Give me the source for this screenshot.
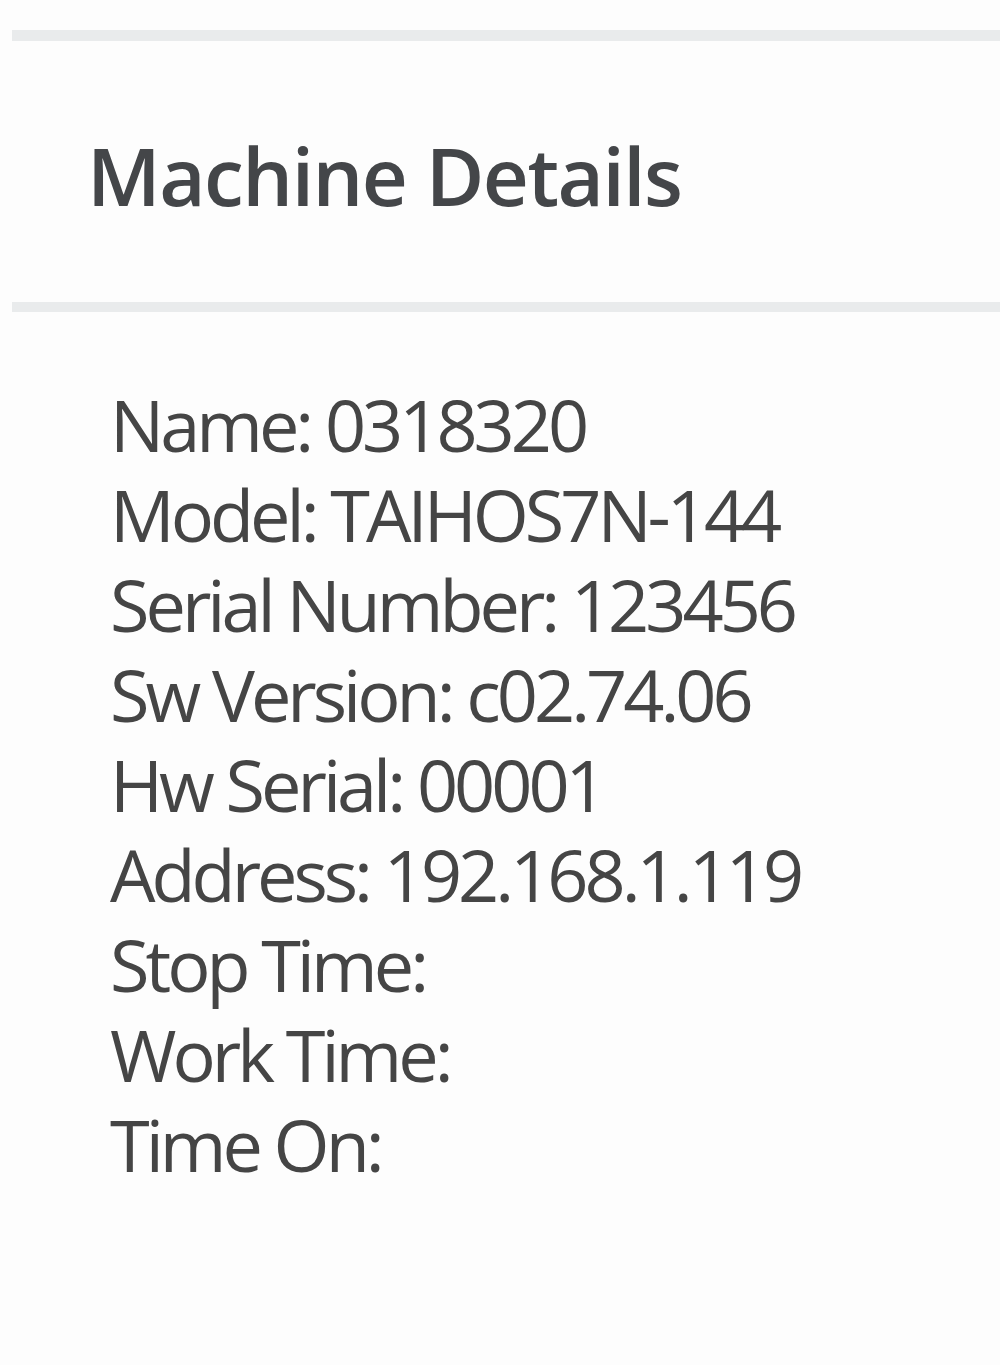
export default function App() {
  const rows = [
    { label: 'Name', value: '0318320' },
    { label: 'Model', value: 'TAIHOS7N-144' },
    { label: 'Serial Number', value: '123456' },
    { label: 'Sw Version', value: 'c02.74.06' },
    { label: 'Hw Serial', value: '00001' },
    { label: 'Address', value: '192.168.1.119' },
    { label: 'Stop Time', value: '' },
    { label: 'Work Time', value: '' },
    { label: 'Time On', value: '' },
  ];

  return (
    <div
      className="min-h-screen bg-[#fdfdfd] pl-[12px] pt-[30px] text-[#454545]"
      style={{ fontFamily: '"Open Sans", "Liberation Sans", sans-serif' }}
    >
      <div className="h-[11px] bg-[#e9ebec]" />

      {/* Header */}
      <div className="pl-[75px] pt-[94px] pb-[87px]">
        <h2 className="text-[80px] leading-[80px] font-semibold tracking-[-1.5px] text-[#444649]">
          Machine Details
        </h2>
      </div>

      <div className="h-[10px] bg-[#e9ebec]" />

      {/* Details */}
      <div className="pl-[98px] pt-[67px] text-[72px] leading-[90px] font-medium tracking-[-4px]">
        {rows.map((row) => (
          <div key={row.label}>
            {row.label}:{row.value ? ` ${row.value}` : ''}
          </div>
        ))}
      </div>
    </div>
  );
}
